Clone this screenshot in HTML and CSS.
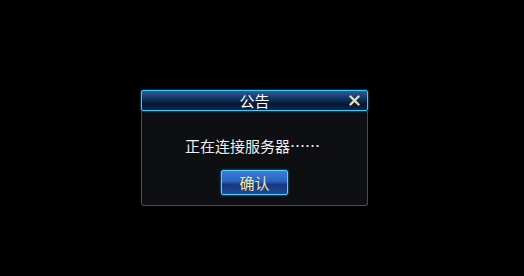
FILE: index.html
```html
<!DOCTYPE html>
<html lang="zh-CN">
<head>
    <meta charset="UTF-8">
    <meta name="viewport" content="width=device-width, initial-scale=1.0">
    <title>公告</title>
    <link rel="stylesheet" href="styles.css">
</head>
<body>
    <div class="screen">
        <div class="dialog">
            <div class="dialog-title">
                <span>公告</span>
                <svg class="close" width="11" height="11" viewBox="0 0 11 11">
                    <path d="M1.5 1.5 L9.5 9.5 M9.5 1.5 L1.5 9.5" stroke="#e8dcaa" stroke-width="2.4" stroke-linecap="round"/>
                </svg>
            </div>
            <div class="dialog-body">
                <p class="message">正在连接服务器……</p>
                <button class="ok">确认</button>
            </div>
        </div>
    </div>
</body>
</html>
```

FILE: styles.css
```css
body {
    margin: 0;
    background-color: #000;
    font-family: "Noto Sans CJK SC", "DejaVu Sans", sans-serif;
}

.screen {
    width: 524px;
    height: 276px;
    padding: 90px 0 0 141px;
    box-sizing: border-box;
}

.dialog {
    width: 227px;
}

.dialog-title {
    position: relative;
    height: 21px;
    box-sizing: border-box;
    border: 1px solid #45c8f5;
    border-radius: 2px;
    background: linear-gradient(#2a5f95 0%, #123a6a 35%, #081630 70%, #0d2a55 100%);
    box-shadow: 0 0 2px #2aa0e0;
    color: #fff;
    font-size: 15px;
    line-height: 19px;
    text-align: center;
}

.close {
    position: absolute;
    right: 7px;
    top: 4px;
}

.dialog-body {
    height: 95px;
    box-sizing: border-box;
    border: 1px solid #4a4c52;
    border-top: none;
    border-radius: 0 0 3px 3px;
    background-color: #0e0f13;
    display: flex;
    flex-direction: column;
    align-items: center;
}

.message {
    margin: 24px 0 0 -4px;
    color: #f0f0f0;
    font-size: 15px;
    line-height: 22px;
    font-feature-settings: "fwid";
}

.ok {
    margin-top: 13px;
    width: 67px;
    height: 25px;
    border: 1px solid #4fd0ff;
    border-radius: 2px;
    background: linear-gradient(#3a7ed8 0%, #2a62c0 45%, #16377a 60%, #1e4a9a 100%);
    box-shadow: 0 0 2px #2ab0f0;
    color: #f5e4a0;
    font-family: "Noto Sans CJK SC", sans-serif;
    font-size: 15px;
    line-height: 21px;
    padding: 0;
}
```
